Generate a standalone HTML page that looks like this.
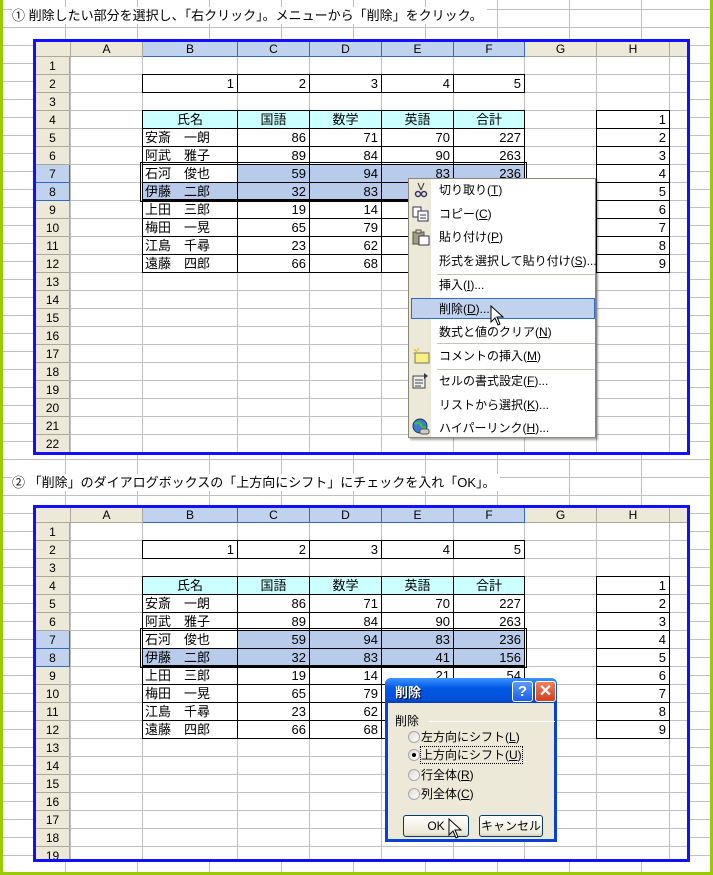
<!DOCTYPE html>
<html style="overflow:hidden"><head><meta charset="utf-8">
<style>
*{margin:0;padding:0;box-sizing:border-box}
html,body{overflow:hidden}
body{width:713px;height:875px;position:relative;overflow:hidden;background:#fff;font-family:"Liberation Sans","Noto Sans CJK JP",sans-serif;font-size:13px;color:#000}
.bg{position:absolute;left:0;top:0;width:713px;height:875px;
background-image:repeating-linear-gradient(to right,transparent 0,transparent 32px,#c0c0c0 32px,#c0c0c0 33px,transparent 33px,transparent 72px),repeating-linear-gradient(to bottom,transparent 0,transparent 4px,#c0c0c0 4px,#c0c0c0 5px,transparent 5px,transparent 18px);
background-size:72px 18px;background-position:33px 0,0 5px}
.gl{position:absolute;background:#99cc00}
.title{position:absolute;left:12px;height:17px;line-height:17px;background:#fff;padding-right:4px;font-size:13px;font-family:"Liberation Sans","Noto Sans CJK JP",sans-serif}
.sheet{position:absolute;left:33px;width:657px;border:3px solid #1010ff;border-bottom-width:3px;overflow:hidden;background:#fff}
.in{position:absolute;left:0;top:0;width:651px;height:410px;overflow:hidden;
background-image:repeating-linear-gradient(to bottom,transparent 0,transparent 14px,#c0c0c0 14px,#c0c0c0 15px,transparent 15px,transparent 18px);background-size:100% 18px;background-position:0 0}
.vl{position:absolute;top:0;width:1px;height:410px;background:#c0c0c0}
.hdr{position:absolute;left:0;top:0;width:651px;height:15px;background:#ece9d8;border-bottom:1px solid #aca899}
.ch{position:absolute;top:0;height:15px;line-height:15px;text-align:center;font-size:12px;border-right:1px solid #aca899}
.ch.s{background:#c1d2ee;border-right:1px solid #316ac5;border-bottom:1px solid #316ac5}
.rh{position:absolute;left:0;width:34px;height:18px;line-height:18px;text-align:center;font-size:12px;background:#ece9d8;border-right:1px solid #aca899;border-bottom:1px solid #aca899}
.rh.s{background:#c1d2ee;border-color:#316ac5}
.c{position:absolute;height:19px;border:1px solid #000;line-height:17px;padding:0 3px;text-align:right;white-space:nowrap;overflow:hidden}
.c.l{text-align:left;padding-left:2px}
.c.m{text-align:center;background:#ccffff}
.c.sel{background:#b8cbea}
.B{left:106px;width:96px}.C{left:201px;width:73px}.D{left:273px;width:73px}.E{left:345px;width:73px}.F{left:417px;width:72px}.H{left:560px;width:74px}
.r2{top:32px}.r4{top:68px}.r5{top:86px}.r6{top:104px}.r7{top:122px}.r8{top:140px}.r9{top:158px}.r10{top:176px}.r11{top:194px}.r12{top:212px}
.selbox{position:absolute;left:104px;top:120px;width:387px;height:40px;border:3px double #000}
.menu{position:absolute;left:408px;top:178px;width:188px;height:260px;background:#fff;border:1px solid #8a867a;box-shadow:2px 2px 2px rgba(0,0,0,.35)}
.strip{position:absolute;left:0;top:0;width:22px;height:258px;background:#ece9d8}
.mi{position:absolute;left:30px;height:20px;line-height:20px;font-size:12px;white-space:nowrap}
.sep{position:absolute;left:28px;width:158px;height:1px;background:#c5c2b8}
.hl{position:absolute;left:2px;top:119px;width:184px;height:21px;background:#c1d2ee;border:1px solid #316ac5}
.dlg{position:absolute;left:385px;top:678px;width:172px;height:164px;background:#ece9d8;border:3px solid #0840d8;border-top:none;border-radius:6px 6px 0 0}
.tb{position:absolute;left:-3px;top:0;width:172px;height:25px;border-radius:6px 6px 0 0;background:linear-gradient(#3d95ff,#0058e6 40%,#0050d8 85%,#003fc0)}
.btn{position:absolute;height:22px;border:1px solid #003c74;border-radius:3px;background:linear-gradient(#fff,#ece9d8 85%,#d6d0c5);text-align:center;line-height:20px;font-size:12px}
.rad{position:absolute;left:20px;width:12px;height:12px;border-radius:50%;border:1px solid #a7a6aa;background:linear-gradient(135deg,#dcdad5,#fff)}
.rt{position:absolute;left:33px;font-size:12px;line-height:16px;white-space:nowrap}
</style></head><body>
<div class="bg"></div>
<div class="gl" style="left:0;top:0;width:3px;height:875px"></div>
<div class="gl" style="left:710px;top:0;width:3px;height:875px"></div>
<div class="gl" style="left:0;top:872px;width:713px;height:3px"></div>

<div class="title" style="top:7px">① 削除したい部分を選択し、「右クリック」。メニューから「削除」をクリック。</div>
<div class="title" style="top:474px">② 「削除」のダイアログボックスの「上方向にシフト」にチェックを入れ「OK」。</div>

<!-- SHEET 1 -->
<div class="sheet" style="top:39px;height:416px">
<div class="in">
<div class="vl" style="left:34px"></div><div class="vl" style="left:106px"></div><div class="vl" style="left:201px"></div><div class="vl" style="left:273px"></div><div class="vl" style="left:345px"></div><div class="vl" style="left:417px"></div><div class="vl" style="left:488px"></div><div class="vl" style="left:560px"></div><div class="vl" style="left:633px"></div>
<div class="hdr"></div>
<div class="ch" style="left:0;width:35px"></div>
<div class="ch" style="left:35px;width:72px">A</div>
<div class="ch s" style="left:107px;width:95px">B</div>
<div class="ch s" style="left:202px;width:72px">C</div>
<div class="ch s" style="left:274px;width:72px">D</div>
<div class="ch s" style="left:346px;width:72px">E</div>
<div class="ch s" style="left:418px;width:71px">F</div>
<div class="ch" style="left:489px;width:72px">G</div>
<div class="ch" style="left:561px;width:73px">H</div>
<div class="rh" style="top:15px">1</div><div class="rh" style="top:33px">2</div><div class="rh" style="top:51px">3</div><div class="rh" style="top:69px">4</div><div class="rh" style="top:87px">5</div><div class="rh" style="top:105px">6</div><div class="rh s" style="top:123px">7</div><div class="rh s" style="top:141px">8</div><div class="rh" style="top:159px">9</div><div class="rh" style="top:177px">10</div><div class="rh" style="top:195px">11</div><div class="rh" style="top:213px">12</div><div class="rh" style="top:231px">13</div><div class="rh" style="top:249px">14</div><div class="rh" style="top:267px">15</div><div class="rh" style="top:285px">16</div><div class="rh" style="top:303px">17</div><div class="rh" style="top:321px">18</div><div class="rh" style="top:339px">19</div><div class="rh" style="top:357px">20</div><div class="rh" style="top:375px">21</div><div class="rh" style="top:393px">22</div>
<div class="c B r2">1</div><div class="c C r2">2</div><div class="c D r2">3</div><div class="c E r2">4</div><div class="c F r2">5</div>
<div class="c m B r4">氏名</div><div class="c m C r4">国語</div><div class="c m D r4">数学</div><div class="c m E r4">英語</div><div class="c m F r4">合計</div>
<div class="c l B r5">安斎　一朗</div><div class="c C r5">86</div><div class="c D r5">71</div><div class="c E r5">70</div><div class="c F r5">227</div>
<div class="c l B r6">阿武　雅子</div><div class="c C r6">89</div><div class="c D r6">84</div><div class="c E r6">90</div><div class="c F r6">263</div>
<div class="c l B r7">石河　俊也</div><div class="c sel C r7">59</div><div class="c sel D r7">94</div><div class="c sel E r7">83</div><div class="c sel F r7">236</div>
<div class="c l sel B r8">伊藤　二郎</div><div class="c sel C r8">32</div><div class="c sel D r8">83</div><div class="c sel E r8">41</div><div class="c sel F r8">156</div>
<div class="c l B r9">上田　三郎</div><div class="c C r9">19</div><div class="c D r9">14</div><div class="c E r9">21</div><div class="c F r9">54</div>
<div class="c l B r10">梅田　一晃</div><div class="c C r10">65</div><div class="c D r10">79</div><div class="c E r10">80</div><div class="c F r10">224</div>
<div class="c l B r11">江島　千尋</div><div class="c C r11">23</div><div class="c D r11">62</div><div class="c E r11">59</div><div class="c F r11">144</div>
<div class="c l B r12">遠藤　四郎</div><div class="c C r12">66</div><div class="c D r12">68</div><div class="c E r12">72</div><div class="c F r12">206</div>
<div class="selbox"></div>
<div class="c H r4">1</div><div class="c H r5">2</div><div class="c H r6">3</div><div class="c H r7">4</div><div class="c H r8">5</div><div class="c H r9">6</div><div class="c H r10">7</div><div class="c H r11">8</div><div class="c H r12">9</div>
</div></div>

<!-- SHEET 2 -->
<div class="sheet" style="top:505px;height:357px">
<div class="in">
<div class="vl" style="left:34px"></div><div class="vl" style="left:106px"></div><div class="vl" style="left:201px"></div><div class="vl" style="left:273px"></div><div class="vl" style="left:345px"></div><div class="vl" style="left:417px"></div><div class="vl" style="left:488px"></div><div class="vl" style="left:560px"></div><div class="vl" style="left:633px"></div>
<div class="hdr"></div>
<div class="ch" style="left:0;width:35px"></div>
<div class="ch" style="left:35px;width:72px">A</div>
<div class="ch s" style="left:107px;width:95px">B</div>
<div class="ch s" style="left:202px;width:72px">C</div>
<div class="ch s" style="left:274px;width:72px">D</div>
<div class="ch s" style="left:346px;width:72px">E</div>
<div class="ch s" style="left:418px;width:71px">F</div>
<div class="ch" style="left:489px;width:72px">G</div>
<div class="ch" style="left:561px;width:73px">H</div>
<div class="rh" style="top:15px">1</div><div class="rh" style="top:33px">2</div><div class="rh" style="top:51px">3</div><div class="rh" style="top:69px">4</div><div class="rh" style="top:87px">5</div><div class="rh" style="top:105px">6</div><div class="rh s" style="top:123px">7</div><div class="rh s" style="top:141px">8</div><div class="rh" style="top:159px">9</div><div class="rh" style="top:177px">10</div><div class="rh" style="top:195px">11</div><div class="rh" style="top:213px">12</div><div class="rh" style="top:231px">13</div><div class="rh" style="top:249px">14</div><div class="rh" style="top:267px">15</div><div class="rh" style="top:285px">16</div><div class="rh" style="top:303px">17</div><div class="rh" style="top:321px">18</div><div class="rh" style="top:339px">19</div>
<div class="c B r2">1</div><div class="c C r2">2</div><div class="c D r2">3</div><div class="c E r2">4</div><div class="c F r2">5</div>
<div class="c m B r4">氏名</div><div class="c m C r4">国語</div><div class="c m D r4">数学</div><div class="c m E r4">英語</div><div class="c m F r4">合計</div>
<div class="c l B r5">安斎　一朗</div><div class="c C r5">86</div><div class="c D r5">71</div><div class="c E r5">70</div><div class="c F r5">227</div>
<div class="c l B r6">阿武　雅子</div><div class="c C r6">89</div><div class="c D r6">84</div><div class="c E r6">90</div><div class="c F r6">263</div>
<div class="c l B r7">石河　俊也</div><div class="c sel C r7">59</div><div class="c sel D r7">94</div><div class="c sel E r7">83</div><div class="c sel F r7">236</div>
<div class="c l sel B r8">伊藤　二郎</div><div class="c sel C r8">32</div><div class="c sel D r8">83</div><div class="c sel E r8">41</div><div class="c sel F r8">156</div>
<div class="c l B r9">上田　三郎</div><div class="c C r9">19</div><div class="c D r9">14</div><div class="c E r9">21</div><div class="c F r9">54</div>
<div class="c l B r10">梅田　一晃</div><div class="c C r10">65</div><div class="c D r10">79</div><div class="c E r10">80</div><div class="c F r10">224</div>
<div class="c l B r11">江島　千尋</div><div class="c C r11">23</div><div class="c D r11">62</div><div class="c E r11">59</div><div class="c F r11">144</div>
<div class="c l B r12">遠藤　四郎</div><div class="c C r12">66</div><div class="c D r12">68</div><div class="c E r12">72</div><div class="c F r12">206</div>
<div class="selbox"></div>
<div class="c H r4">1</div><div class="c H r5">2</div><div class="c H r6">3</div><div class="c H r7">4</div><div class="c H r8">5</div><div class="c H r9">6</div><div class="c H r10">7</div><div class="c H r11">8</div><div class="c H r12">9</div>
</div></div>

<!-- CONTEXT MENU -->
<div class="menu">
<div class="strip"></div>
<div class="hl"></div>
<svg style="position:absolute;left:4px;top:3px" width="16" height="16"><path d="M5 1L8 8M11 1L8 8" stroke="#333" fill="none"/><circle cx="5" cy="12" r="2.5" stroke="#336" fill="none" stroke-width="1.5"/><circle cx="11" cy="12" r="2.5" stroke="#336" fill="none" stroke-width="1.5"/></svg>
<svg style="position:absolute;left:3px;top:27px" width="18" height="16"><rect x="1" y="1" width="8" height="10" fill="#fff" stroke="#335"/><rect x="6" y="5" width="10" height="10" fill="#fff" stroke="#335"/><path d="M8 9h6M8 12h6" stroke="#335"/></svg>
<svg style="position:absolute;left:3px;top:50px" width="18" height="17"><rect x="1" y="3" width="11" height="12" fill="#a39e80" stroke="#554"/><rect x="4" y="1" width="5" height="3" fill="#dcd" stroke="#554"/><rect x="7" y="7" width="10" height="9" fill="#fff" stroke="#335"/></svg>
<svg style="position:absolute;left:3px;top:168px" width="18" height="17"><path d="M2 2l3 3M6 1v3M1 6h3" stroke="#e8c000"/><rect x="3" y="6" width="14" height="10" fill="#f7f080" stroke="#776"/></svg>
<svg style="position:absolute;left:3px;top:193px" width="18" height="17"><rect x="1" y="4" width="12" height="12" fill="#eee" stroke="#444"/><path d="M3 8h8M3 11h8M3 14h6" stroke="#444"/><path d="M12 1l4 3-4 3z" fill="#335"/></svg>
<svg style="position:absolute;left:3px;top:239px" width="18" height="17"><circle cx="8" cy="8" r="7" fill="#3a7ad8" stroke="#235"/><path d="M3 6q4-3 6 1t5 2" stroke="#4b4" stroke-width="2.5" fill="none"/><rect x="8" y="11" width="9" height="5" rx="2" fill="#ccc" stroke="#555"/></svg>
<div class="mi" style="top:1px">切り取り(<u>T</u>)</div>
<div class="mi" style="top:25px">コピー(<u>C</u>)</div>
<div class="mi" style="top:48px">貼り付け(<u>P</u>)</div>
<div class="mi" style="top:72px">形式を選択して貼り付け(<u>S</u>)...</div>
<div class="sep" style="top:95px"></div>
<div class="mi" style="top:96px">挿入(<u>I</u>)...</div>
<div class="mi" style="top:120px">削除(<u>D</u>)...</div>
<div class="mi" style="top:143px">数式と値のクリア(<u>N</u>)</div>
<div class="sep" style="top:164px"></div>
<div class="mi" style="top:167px">コメントの挿入(<u>M</u>)</div>
<div class="sep" style="top:190px"></div>
<div class="mi" style="top:192px">セルの書式設定(<u>F</u>)...</div>
<div class="mi" style="top:216px">リストから選択(<u>K</u>)...</div>
<div class="mi" style="top:239px">ハイパーリンク(<u>H</u>)...</div>
</div>
<svg style="position:absolute;left:490px;top:305px" width="14" height="22"><path d="M1 1v16l4-4 3 7 2-1-3-7h6z" fill="#fff" stroke="#000"/></svg>

<!-- DIALOG -->
<div class="dlg">
<div class="tb"></div>
<div style="position:absolute;left:7px;top:4px;color:#fff;font-weight:bold;font-size:13px;text-shadow:1px 1px #003">削除</div>
<div style="position:absolute;left:124px;top:3px;width:21px;height:21px;border:1px solid #fff;border-radius:3px;background:linear-gradient(#5a9cff,#1a5ee8);color:#fff;font-weight:bold;text-align:center;line-height:19px;font-size:15px">?</div>
<div style="position:absolute;left:147px;top:3px;width:21px;height:21px;border:1px solid #fff;border-radius:3px;background:linear-gradient(#f08060,#d0401c);color:#fff;font-weight:bold;text-align:center;line-height:19px;font-size:16px">✕</div>
<div style="position:absolute;left:7px;top:34px;font-size:12px">削除</div>
<div style="position:absolute;left:41px;top:43px;width:126px;height:1px;background:#aca899;border-bottom:1px solid #fff"></div>
<div class="rad" style="top:53px"></div><div class="rt" style="top:51px">左方向にシフト(<u>L</u>)</div>
<div class="rad" style="top:71px"><div style="position:absolute;left:3px;top:3px;width:4px;height:4px;border-radius:50%;background:#000"></div></div><div class="rt" style="top:69px;outline:1px dotted #000">上方向にシフト(<u>U</u>)</div>
<div class="rad" style="top:91px"></div><div class="rt" style="top:89px">行全体(<u>R</u>)</div>
<div class="rad" style="top:110px"></div><div class="rt" style="top:108px">列全体(<u>C</u>)</div>
<div class="btn" style="left:15px;top:137px;width:66px">OK</div>
<div class="btn" style="left:91px;top:137px;width:64px">キャンセル</div>
</div>
<svg style="position:absolute;left:448px;top:818px" width="14" height="22"><path d="M1 1v16l4-4 3 7 2-1-3-7h6z" fill="#fff" stroke="#000"/></svg>
</body></html>
